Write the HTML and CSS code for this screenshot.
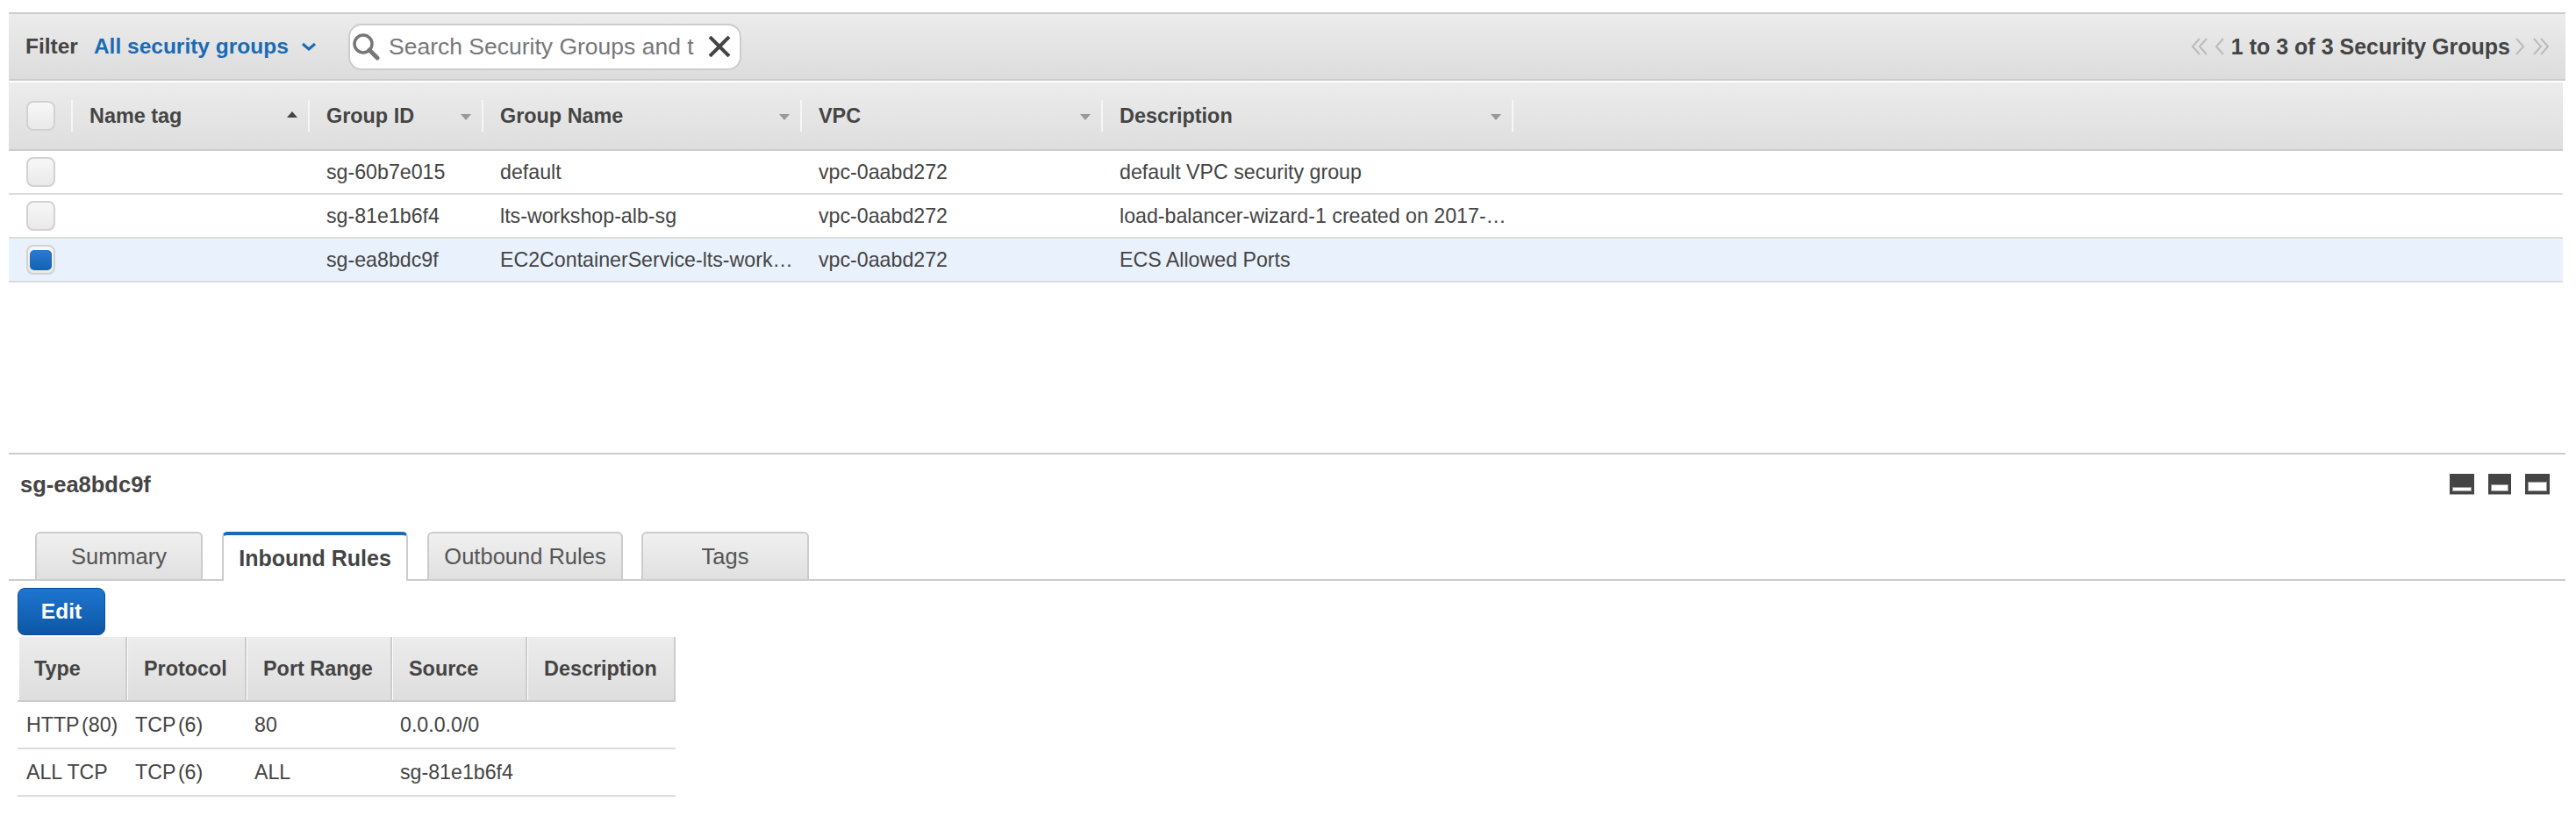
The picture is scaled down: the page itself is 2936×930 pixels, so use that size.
FILE: index.html
```html
<!doctype html>
<html lang="en">
<head>
    <meta charset="UTF-8">
    <title>Security Groups</title>
    <link rel="stylesheet" href="styles.css">
</head>
<body>
<div class="toolbar">
    <div class="filter">
        <span class="filter-label">Filter</span>
        <span class="filter-value">All security groups</span>
        <svg class="filter-caret" width="18" height="11" viewBox="0 0 18 11"><path d="M2 2l7 6 7-6" fill="none" stroke="#1b6ab5" stroke-width="3"/></svg>
    </div>

    <div class="search">
        <svg class="search-icon" width="32" height="32" viewBox="0 0 32 32">
            <circle cx="13" cy="13" r="10" fill="none" stroke="#777" stroke-width="3.5"/>
            <path d="M20 20l9 9" stroke="#777" stroke-width="5" stroke-linecap="round"/>
        </svg>
        <span class="search-text">Search Security Groups and t</span>
        <svg class="search-clear" width="26" height="24" viewBox="0 0 26 24"><path d="M2 1l22 22M24 1L2 23" stroke="#444" stroke-width="4"/></svg>
    </div>

    <div class="pager">
        <svg width="18" height="20" viewBox="0 0 18 20"><path d="M9 1L1 10l8 9M17 1l-8 9 8 9" fill="none" stroke="#bbb" stroke-width="2"/></svg>
        <svg class="pager-prev" width="11" height="20" viewBox="0 0 11 20"><path d="M10 1L2 10l8 9" fill="none" stroke="#bbb" stroke-width="2"/></svg>
        <span class="pager-text">1 to 3 of 3 Security Groups</span>
        <svg class="pager-next" width="11" height="20" viewBox="0 0 11 20"><path d="M1 1l8 9-8 9" fill="none" stroke="#bbb" stroke-width="2"/></svg>
        <svg width="18" height="20" viewBox="0 0 18 20"><path d="M1 1l8 9-8 9M9 1l8 9-8 9" fill="none" stroke="#bbb" stroke-width="2"/></svg>
    </div>
</div>

<div class="grid">
    <div class="grid-row grid-head">
        <div class="th"><span class="check"></span></div>
        <div class="th"><span>Name tag</span><i class="sort sort-up"></i></div>
        <div class="th"><span>Group ID</span><i class="sort"></i></div>
        <div class="th"><span>Group Name</span><i class="sort"></i></div>
        <div class="th"><span>VPC</span><i class="sort"></i></div>
        <div class="th"><span>Description</span><i class="sort"></i></div>
    </div>
    <div class="grid-row">
        <div class="td"><span class="check"></span></div>
        <div class="td"></div>
        <div class="td">sg-60b7e015</div>
        <div class="td">default</div>
        <div class="td">vpc-0aabd272</div>
        <div class="td">default VPC security group</div>
    </div>
    <div class="grid-row">
        <div class="td"><span class="check"></span></div>
        <div class="td"></div>
        <div class="td">sg-81e1b6f4</div>
        <div class="td">lts-workshop-alb-sg</div>
        <div class="td">vpc-0aabd272</div>
        <div class="td">load-balancer-wizard-1 created on 2017-…</div>
    </div>
    <div class="grid-row grid-row-selected">
        <div class="td"><span class="check check-on"></span></div>
        <div class="td"></div>
        <div class="td">sg-ea8bdc9f</div>
        <div class="td">EC2ContainerService-lts-work…</div>
        <div class="td">vpc-0aabd272</div>
        <div class="td">ECS Allowed Ports</div>
    </div>
</div>

<div class="pane">
    <div class="pane-head">
        <span class="pane-title">sg-ea8bdc9f</span>
        <div class="pane-sizes">
            <div class="pane-size"><span class="pane-fill pane-fill-s"></span></div>
            <div class="pane-size pane-size-mid"><span class="pane-fill pane-fill-m"></span></div>
            <div class="pane-size"><span class="pane-fill pane-fill-l"></span></div>
        </div>
    </div>

    <div class="tabs">
        <div class="tab tab-summary">Summary</div>
        <div class="tab tab-active">Inbound Rules</div>
        <div class="tab tab-outbound">Outbound Rules</div>
        <div class="tab tab-tags">Tags</div>
    </div>

    <button class="edit-btn">Edit</button>

    <div class="rules">
        <div class="rules-row rules-head">
            <div class="rules-th">Type</div>
            <div class="rules-th">Protocol</div>
            <div class="rules-th">Port Range</div>
            <div class="rules-th">Source</div>
            <div class="rules-th">Description</div>
        </div>
        <div class="rules-row">
            <div class="rules-td rules-paren">HTTP (80)</div>
            <div class="rules-td rules-paren">TCP (6)</div>
            <div class="rules-td">80</div>
            <div class="rules-td">0.0.0.0/0</div>
            <div class="rules-td"></div>
        </div>
        <div class="rules-row">
            <div class="rules-td">ALL TCP</div>
            <div class="rules-td rules-paren">TCP (6)</div>
            <div class="rules-td">ALL</div>
            <div class="rules-td">sg-81e1b6f4</div>
            <div class="rules-td"></div>
        </div>
    </div>
</div>
</body>
</html>
```
FILE: styles.css
```css
* {
    box-sizing: border-box;
}

body {
    margin: 0;
    padding: 14px 12px 0 10px;
    color: #444;
    background-color: #fff;
    font-family: "Liberation Sans", Arial, sans-serif;
    font-size: 23.2px;
    overflow: hidden;
}

.toolbar {
    height: 78px;
    display: flex;
    align-items: center;
    border-top: 2px solid #ccc;
    border-bottom: 2px solid #ccc;
    background: linear-gradient(#ececec, #dcdcdc);
}

.filter {
    display: flex;
    align-items: center;
    padding-left: 19px;
    width: 387px;
    font-size: 24.5px;
    font-weight: bold;
}

.filter-value {
    margin-left: 18px;
    color: #1b6ab5;
}

.filter-caret {
    margin-left: 14px;
}

.search {
    width: 448px;
    height: 53px;
    display: flex;
    align-items: center;
    padding: 0 10px 0 2px;
    background-color: #fff;
    border: 2px solid #ccc;
    border-radius: 15px;
}

.search-icon {
    flex: none;
}

.search-text {
    flex: 1;
    margin-left: 10px;
    color: #777;
    font-size: 26.5px;
    white-space: nowrap;
}

.search-clear {
    flex: none;
}

.pager {
    margin-left: auto;
    margin-right: 19px;
    display: flex;
    align-items: center;
}

.pager-prev {
    margin-left: 8px;
}

.pager-next {
    margin-right: 9px;
}

.pager-text {
    margin: 0 6px 0 8px;
    font-size: 25px;
    font-weight: bold;
}

.grid {
    margin-top: 2px;
    margin-right: 3px;
}

.grid-row {
    display: grid;
    grid-template-columns: 73px 270px 198px 363px 343px 468px 1fr;
    height: 50px;
    align-items: center;
    border-bottom: 2px solid #ddd;
}

.grid-row-selected {
    background-color: #e9f1fc;
}

.grid-head {
    height: 78px;
    border-bottom: 2px solid #ccc;
    background: linear-gradient(#ececec, #dedede);
}

.th {
    height: 36px;
    display: flex;
    align-items: center;
    justify-content: space-between;
    padding: 0 12px 0 19px;
    border-right: 2px solid #f6f6f6;
    font-weight: bold;
    font-size: 23.4px;
}

.th:first-child {
    padding-left: 20px;
}

.td {
    padding: 0 0 0 19px;
    white-space: nowrap;
}

.td:first-child {
    padding-left: 20px;
    display: flex;
}

.check {
    flex: none;
    width: 33px;
    height: 34px;
    display: flex;
    align-items: center;
    justify-content: center;
    border: 2px solid #d2d2d2;
    border-radius: 8px;
    background: linear-gradient(#f7f7f7, #e9e9e9);
}

.check-on::after {
    content: "";
    width: 25px;
    height: 23px;
    border-radius: 5px;
    background: linear-gradient(#2a7ad0, #1361b4);
}

.sort {
    width: 0;
    height: 0;
    margin-top: 3px;
    border-left: 6px solid transparent;
    border-right: 6px solid transparent;
    border-top: 7px solid #999;
}

.sort-up {
    margin-top: -3px;
    border-top: none;
    border-bottom: 7px solid #444;
}

.pane {
    margin-top: 194px;
    border-top: 2px solid #ccc;
}

.pane-head {
    height: 68px;
    display: flex;
    align-items: center;
    justify-content: space-between;
    padding: 0 18px 0 13px;
    margin-bottom: 20px;
}

.pane-title {
    font-size: 25.5px;
    font-weight: bold;
}

.pane-sizes {
    display: flex;
    gap: 16px;
}

.pane-size {
    width: 28px;
    height: 24px;
    display: flex;
    align-items: flex-end;
    padding: 0 3px 3px;
    background-color: #444;
    border-bottom: 1px solid #aaa;
}

.pane-size-mid {
    width: 26px;
}

.pane-fill {
    flex: 1;
    background-color: #fff;
    border: 1px solid #999;
}

.pane-fill-s {
    height: 5px;
}

.pane-fill-m {
    height: 8px;
}

.pane-fill-l {
    height: 11px;
}

.tabs {
    display: flex;
    gap: 22px;
    height: 56px;
    padding-left: 30px;
    border-bottom: 2px solid #ccc;
}

.tab {
    height: 54px;
    width: 191px;
    display: flex;
    align-items: center;
    justify-content: center;
    color: #555;
    font-size: 25.5px;
    border: 2px solid #ccc;
    border-bottom: none;
    border-radius: 6px 6px 0 0;
    background: linear-gradient(#f0f0f0, #e0e0e0);
}

.tab-outbound {
    width: 223px;
}

.tab-tags {
    margin-left: -1px;
}

.tab-active {
    width: 212px;
    height: 56px;
    padding-top: 1px;
    color: #444;
    font-size: 25px;
    font-weight: bold;
    border-top: 4px solid #1b6ab5;
    background: #fff;
}

.edit-btn {
    display: block;
    width: 100px;
    height: 54px;
    margin: 8px 0 0 10px;
    padding: 0;
    color: #fff;
    font-family: inherit;
    font-size: 24.5px;
    font-weight: bold;
    border: 1px solid #0d4f96;
    border-radius: 8px;
    background: linear-gradient(#1e75cf, #0c57a5);
}

.rules {
    width: 750px;
    margin: 2px 0 0 10px;
}

.rules-row {
    display: grid;
    grid-template-columns: 126px 136px 166px 154px 168px;
    height: 54px;
    align-items: center;
    border-bottom: 2px solid #ddd;
}

.rules-head {
    height: 74px;
    align-items: stretch;
    border-bottom: 2px solid #ccc;
}

.rules-th {
    display: flex;
    align-items: center;
    margin-right: 1px;
    padding-left: 18px;
    font-size: 23.4px;
    font-weight: bold;
    border-right: 2px solid #ccc;
    background: linear-gradient(#ececec, #dedede);
}

.rules-th:first-child {
    margin-left: 2px;
    padding-left: 17px;
}

.rules-th:last-child {
    margin-right: 0;
}

.rules-td {
    padding-left: 8px;
    white-space: nowrap;
}

.rules-td:first-child {
    padding-left: 10px;
}

.rules-paren {
    word-spacing: -3.5px;
}
```
